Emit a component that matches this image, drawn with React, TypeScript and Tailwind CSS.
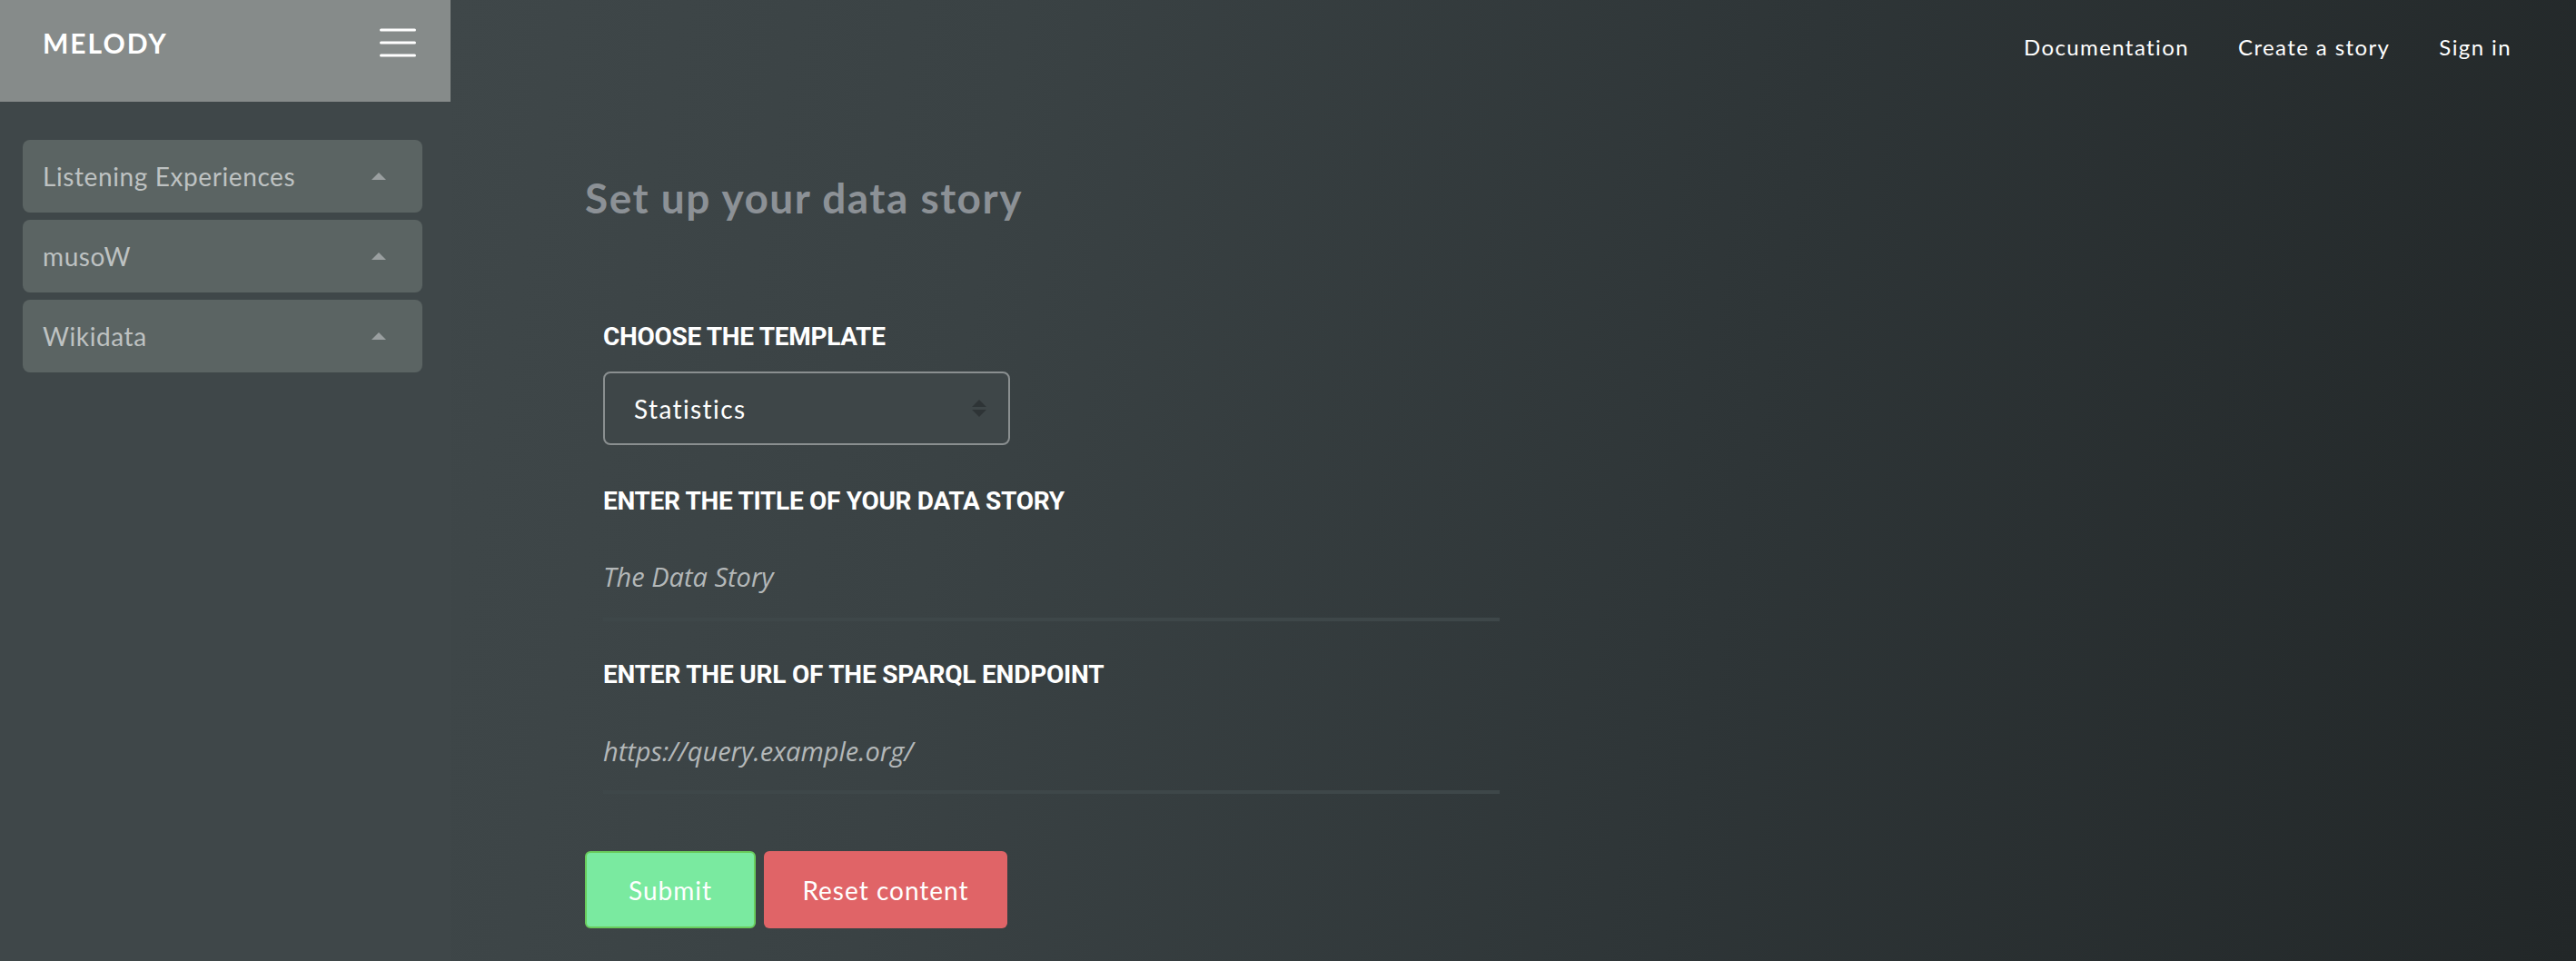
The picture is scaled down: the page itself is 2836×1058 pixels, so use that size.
import React from "react";

const sans = "font-['Lato','Noto_Sans',sans-serif]";

function Caret() {
  return (
    <svg width="16" height="8" viewBox="0 0 16 8" className="shrink-0">
      <polygon points="0,8 8,0 16,8" fill="#9a9fa0" />
    </svg>
  );
}

function SideItem({ label }: { label: string }) {
  return (
    <div className="h-[80px] rounded-[8px] bg-[#5b6463] flex items-center justify-between pl-[22px] pr-[40px]">
      <span className={`${sans} text-[28px] tracking-[0.6px] text-[#bec2c2]`}>{label}</span>
      <Caret />
    </div>
  );
}

export default function App() {
  return (
    <div className="w-full h-[1058px] flex bg-[#3f4749] overflow-hidden">
      <aside className="w-[496px] shrink-0 bg-[#3f4749] flex flex-col">
        <div className="h-[112px] bg-[#868b8a] flex items-center justify-between pl-[47px] pr-[38px] pb-[18px]">
          <span className={`${sans} font-bold text-[30px] tracking-[2px] text-white`}>MELODY</span>
          <svg width="40" height="32" viewBox="0 0 40 32">
            <g stroke="#ffffff" strokeWidth="3" strokeLinecap="round">
              <line x1="1.5" y1="2" x2="38.5" y2="2" />
              <line x1="1.5" y1="16" x2="38.5" y2="16" />
              <line x1="1.5" y1="30" x2="38.5" y2="30" />
            </g>
          </svg>
        </div>
        <div className="pt-[42px] pl-[25px] pr-[31px] flex flex-col gap-[8px]">
          <SideItem label="Listening Experiences" />
          <SideItem label="musoW" />
          <SideItem label="Wikidata" />
        </div>
      </aside>
      <main className="flex-1 flex flex-col bg-[linear-gradient(100deg,#3f4749_0%,#3a4244_25%,#2e3537_60%,#222728_100%)]">
        <nav className={`${sans} h-[104px] flex items-center justify-end gap-[54px] pr-[71px] text-[24px] tracking-[1.4px] text-white`}>
          <span>Documentation</span>
          <span>Create a story</span>
          <span>Sign in</span>
        </nav>
        <div className="pl-[148px] flex flex-col">
          <h1 className={`${sans} mt-[90px] font-bold text-[46px] leading-[48px] tracking-[1.5px] text-[#8c9196]`}>
            Set up your data story
          </h1>
          <div className="pl-[20px] flex flex-col">
            <label className="mt-[114px] font-['Roboto',sans-serif] font-bold text-[28px] leading-[30px] tracking-[-0.3px] text-white">
              CHOOSE THE TEMPLATE
            </label>
            <div className="mt-[23px] w-[448px] h-[81px] rounded-[8px] border-2 border-[#8a8f90] bg-[#3e4648] flex items-center justify-between pl-[32px] pr-[24px]">
              <span className={`${sans} text-[28px] tracking-[1.4px] text-white`}>Statistics</span>
              <svg width="16" height="20" viewBox="0 0 16 20">
                <polygon points="0,8 8,0 16,8" fill="#2e3436" />
                <polygon points="0,11 8,19 16,11" fill="#2e3436" />
              </svg>
            </div>
            <label className="mt-[47px] font-['Roboto',sans-serif] font-bold text-[28px] leading-[30px] tracking-[-0.3px] text-white">
              ENTER THE TITLE OF YOUR DATA STORY
            </label>
            <div className="mt-[50px] w-[987px] pb-[27px] border-b-4 border-[#3e4749]">
              <span className="font-['Open_Sans',sans-serif] italic text-[29px] leading-[36px] text-[#b4b8b9]">
                The Data Story
              </span>
            </div>
            <label className="mt-[44px] font-['Roboto',sans-serif] font-bold text-[28px] leading-[30px] tracking-[-0.2px] text-white">
              ENTER THE URL OF THE SPARQL ENDPOINT
            </label>
            <div className="mt-[51px] w-[987px] pb-[25px] border-b-4 border-[#3e4749]">
              <span className="font-['Open_Sans',sans-serif] italic text-[29px] leading-[36px] text-[#b4b8b9]">
                https://query.example.org/
              </span>
            </div>
          </div>
          <div className="mt-[63px] flex gap-[9px]">
            <button className={`${sans} w-[188px] h-[85px] rounded-[6px] bg-[#7aeaa0] border-2 border-[#69cc5c] text-white text-[28px] tracking-[1px]`}>
              Submit
            </button>
            <button className={`${sans} w-[268px] h-[85px] rounded-[6px] bg-[#e06467] text-white text-[28px] tracking-[1px]`}>
              Reset content
            </button>
          </div>
        </div>
      </main>
    </div>
  );
}
